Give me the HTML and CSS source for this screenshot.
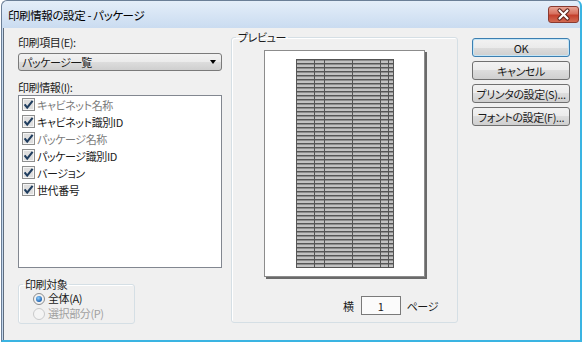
FILE: index.html
```html
<!DOCTYPE html>
<html lang="ja">
<head>
    <meta charset="UTF-8">
    <title>印刷情報の設定 - パッケージ</title>
    <link rel="stylesheet" href="styles.css">
</head>
<body>
    <svg class="defs" width="0" height="0">
        <symbol id="check" viewBox="0 0 13 13">
            <rect x="0.5" y="0.5" width="12" height="12" fill="#f5f5f5" stroke="#8e8f8f"/>
            <rect x="2" y="2" width="9" height="9" fill="#dedede"/>
            <path d="M2.6 6.4 L5.2 9.6 L10.6 2.8" fill="none" stroke="#1f3d5f" stroke-width="2.1"/>
        </symbol>
    </svg>

    <div class="window">
        <div class="titlebar">
            <span class="title">印刷情報の設定 - パッケージ</span>
            <span class="close-btn">
                <svg width="31" height="17" viewBox="0 0 31 17">
                    <path d="M11.5 4.5 L19.5 12.5 M19.5 4.5 L11.5 12.5" stroke="#5a2119" stroke-width="4.2" stroke-linecap="round"/>
                    <path d="M11.5 4.5 L19.5 12.5 M19.5 4.5 L11.5 12.5" stroke="#ffffff" stroke-width="2.2" stroke-linecap="round"/>
                </svg>
            </span>
        </div>

        <div class="client">
            <div class="left-col">
                <div class="field-label">印刷項目(E):</div>
                <div class="combo">
                    <span>パッケージ一覧</span>
                    <span class="combo-arrow"></span>
                </div>

                <div class="field-label list-label">印刷情報(I):</div>
                <ul class="listbox">
                    <li class="item disabled"><svg class="checkbox"><use href="#check"/></svg>キャビネット名称</li>
                    <li class="item"><svg class="checkbox"><use href="#check"/></svg>キャビネット識別ID</li>
                    <li class="item disabled"><svg class="checkbox"><use href="#check"/></svg>パッケージ名称</li>
                    <li class="item"><svg class="checkbox"><use href="#check"/></svg>パッケージ識別ID</li>
                    <li class="item"><svg class="checkbox"><use href="#check"/></svg>バージョン</li>
                    <li class="item"><svg class="checkbox"><use href="#check"/></svg>世代番号</li>
                </ul>

                <fieldset class="group target-group">
                    <legend>印刷対象</legend>
                    <div class="radio-row">
                        <svg class="radio" width="12" height="12" viewBox="0 0 12 12">
                            <defs>
                                <radialGradient id="dot" cx="40%" cy="35%" r="65%">
                                    <stop offset="0" stop-color="#8fd0ff"/>
                                    <stop offset="1" stop-color="#1b5fae"/>
                                </radialGradient>
                            </defs>
                            <circle cx="6" cy="6" r="5.5" fill="#f2f2f2" stroke="#8a8c8e"/>
                            <circle cx="6" cy="6" r="3" fill="url(#dot)"/>
                        </svg>
                        全体(A)
                    </div>
                    <div class="radio-row disabled">
                        <svg class="radio" width="12" height="12" viewBox="0 0 12 12">
                            <circle cx="6" cy="6" r="5.5" fill="#f4f4f4" stroke="#c8c9ca"/>
                        </svg>
                        選択部分(P)
                    </div>
                </fieldset>
            </div>

            <fieldset class="group preview-group">
                <legend>プレビュー</legend>
                <div class="page">
                    <div class="sheet-table">
                        <div class="col"></div>
                        <div class="col"></div>
                        <div class="col"></div>
                        <div class="col"></div>
                        <div class="col"></div>
                        <div class="col"></div>
                    </div>
                </div>
                <div class="page-count">
                    <span>横</span>
                    <span class="count-box">1</span>
                    <span>ページ</span>
                </div>
            </fieldset>

            <div class="buttons">
                <button type="button" class="btn default-btn">OK</button>
                <button type="button" class="btn">キャンセル</button>
                <button type="button" class="btn">プリンタの設定(S)...</button>
                <button type="button" class="btn">フォントの設定(F)...</button>
            </div>
        </div>
    </div>
</body>
</html>
```

FILE: styles.css
```css
body {
    margin: 0;
    background: #ffffff;
    font-family: "Noto Sans CJK JP", "Noto Sans", sans-serif;
    font-size: 11px;
    letter-spacing: -0.4px;
    font-feature-settings: "palt";
    color: #1a1a1a;
}

.defs {
    position: absolute;
}

.window {
    margin-left: 1px;
    width: 581px;
    height: 342px;
    box-sizing: border-box;
    border: 1px solid #6b7f97;
    border-right: 2px solid #3ab4e2;
    border-bottom: 2px solid #3ab4e2;
    border-radius: 6px 6px 0 0;
    background: linear-gradient(#e4eef9, #c9dbf0 28px, #c4d8ef);
    display: flex;
    flex-direction: column;
}

.titlebar {
    height: 27px;
    display: flex;
    align-items: center;
    justify-content: space-between;
    padding-left: 6px;
}

.title {
    line-height: 14px;
    font-size: 11.5px;
    color: #000;
}

.close-btn {
    align-self: flex-start;
    margin-top: 5px;
    margin-right: 1px;
    width: 31px;
    height: 17px;
    box-sizing: border-box;
    border: 1px solid #8a3a30;
    border-radius: 3px;
    background: linear-gradient(#e8a595, #d7715f 45%, #c4402d 55%, #d26a52);
    display: flex;
    align-items: center;
    justify-content: center;
}

.close-btn svg {
    display: block;
    margin: -1px;
}

.client {
    flex: 1;
    margin-left: 1px;
    border-left: 1px solid #5f6d7d;
    background: #f0f0f0;
    display: flex;
    align-items: flex-start;
    padding: 2px 0 0 14px;
}

.left-col {
    width: 204px;
    padding-top: 5px;
}

.field-label {
    line-height: 14px;
    margin-bottom: 4px;
}

.list-label {
    margin-top: 9px;
    margin-bottom: 1px;
}

.combo {
    height: 18px;
    box-sizing: border-box;
    border: 1px solid #7a7a7a;
    border-radius: 3px;
    background: linear-gradient(#f2f2f2, #ebebeb 50%, #dddddd 50%, #cfcfcf);
    display: flex;
    align-items: center;
    justify-content: space-between;
    padding: 0 5px 0 3px;
    line-height: 14px;
}

.combo-arrow {
    width: 0;
    height: 0;
    border-top: 4px solid #000;
    border-left: 3.5px solid transparent;
    border-right: 3.5px solid transparent;
}

.listbox {
    list-style: none;
    margin: 0;
    padding: 0;
    height: 173px;
    box-sizing: border-box;
    border: 1px solid #828790;
    background: #fff;
}

.item {
    height: 17px;
    display: flex;
    align-items: center;
    padding-left: 3px;
    line-height: 14px;
}

.item.disabled {
    color: #7a7a7a;
}

.checkbox {
    width: 13px;
    height: 13px;
    margin-right: 2px;
    flex: none;
}

.group {
    margin: 0;
    padding: 0;
    border: 1px solid #d5dfe5;
    border-radius: 3px;
    box-shadow: inset 1px 1px 0 #fff;
}

.group legend {
    margin-left: 4px;
    padding: 0 2px;
    line-height: 14px;
}

.target-group {
    width: 117px;
    box-sizing: border-box;
    margin-top: 9px;
    padding-bottom: 2px;
}

.radio-row {
    height: 15px;
    display: flex;
    align-items: center;
    padding-left: 14px;
    line-height: 13px;
}

.radio-row.disabled {
    color: #a0a0a0;
}

.radio {
    margin-right: 3px;
    flex: none;
}

.preview-group {
    width: 227px;
    box-sizing: border-box;
    margin-left: 9px;
    padding-bottom: 7px;
}

.page {
    margin: 6px auto 0;
    width: 161px;
    height: 227px;
    box-sizing: border-box;
    border: 1px solid #8c8c8c;
    background: #fff;
    box-shadow: 2px 2px 0 #6a6a6a;
    display: flex;
    justify-content: center;
    padding-top: 8px;
}

.sheet-table {
    width: 98px;
    height: 209px;
    box-sizing: border-box;
    border-right: 1px solid #555;
    border-bottom: 1px solid #555;
    display: flex;
    background: repeating-linear-gradient(#555555 0 1px, #8e8e8e 1px 2px, #c2c2c2 2px 4px);
}

.col {
    border-left: 1px solid #555;
    box-sizing: border-box;
}

.col:nth-child(1) { width: 18px; }
.col:nth-child(2) { width: 10px; }
.col:nth-child(3) { width: 28px; }
.col:nth-child(4) { width: 28px; }
.col:nth-child(5) { width: 8px; }
.col:nth-child(6) { width: 5px; }

.page-count {
    margin-top: 19px;
    padding-left: 111px;
    display: flex;
    align-items: center;
    line-height: 14px;
}

.count-box {
    width: 40px;
    height: 19px;
    box-sizing: border-box;
    margin: 0 6px 0 7px;
    border: 1px solid #7a7a7a;
    background: #fbfbfb;
    display: flex;
    align-items: center;
    justify-content: center;
}

.buttons {
    margin-left: 14px;
    margin-top: 8px;
    display: flex;
    flex-direction: column;
    gap: 4px;
    width: 98px;
}

.btn {
    height: 19px;
    padding: 0;
    font-family: inherit;
    font-size: 11px;
    letter-spacing: -0.4px;
    font-feature-settings: "palt";
    line-height: 14px;
    white-space: nowrap;
    color: #1a1a1a;
    border: 1px solid #707070;
    border-radius: 3px;
    background: linear-gradient(#f2f2f2, #ebebeb 50%, #dddddd 50%, #cfcfcf);
}

.default-btn {
    border-color: #3c7fb1;
    box-shadow: inset 0 0 0 1px #c4e5f6;
}
```
